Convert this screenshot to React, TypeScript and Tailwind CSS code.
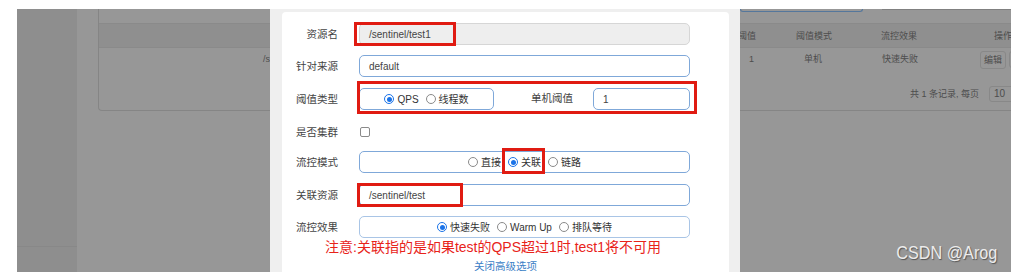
import React from "react";

const Radio = ({ checked, label }: { checked?: boolean; label: string }) => (
  <span className="flex items-center gap-[3px]">
    {checked ? (
      <span className="flex h-[10px] w-[10px] items-center justify-center rounded-full border-[1.5px] border-[#1a73e8] bg-white">
        <span className="h-[5px] w-[5px] rounded-full bg-[#1a73e8]" />
      </span>
    ) : (
      <span className="h-[10px] w-[10px] rounded-full border border-[#8a8a8a] bg-white" />
    )}
    <span>{label}</span>
  </span>
);

const Label = ({ text }: { text: string }) => (
  <div className="w-[56px] shrink-0 text-right text-[10.5px] leading-[14px] text-[#444]">{text}</div>
);

const App: React.FC = () => {
  return (
    <div className="relative h-[272px] w-[1011px] overflow-hidden bg-white font-['Liberation_Sans','Noto_Sans_CJK_SC',sans-serif]">
      <div className="flex h-full flex-col">
        <div className="h-[9px] shrink-0" />
        <div className="flex flex-1">
          <div className="w-[17px] shrink-0" />
          {/* page behind the dialog */}
          <div className="flex flex-1 bg-[#979797]">
            <div className="flex w-[60px] shrink-0 flex-col bg-[#8e8e8e]">
              <div className="h-[238px] border-b border-[#888]" />
            </div>
            <div className="flex-1 overflow-hidden whitespace-nowrap pl-[21px] text-[9px] leading-[12px] text-[#4d4d4d]">
              <div className="h-[102px] rounded-bl-[4px] border-b border-l border-[#858585]">
                <div className="flex h-[14px]">
                  <div className="ml-[641px] h-[3px] w-[123px] shrink-0 rounded-b-[3px] border-x border-b border-[#55779c]" />
                  <div className="ml-[19px] h-px flex-1 bg-[#808080]" />
                </div>
                <div className="flex h-[25px] items-center border-y border-[#8a8a8a] bg-[#8f8f8f]">
                  <span className="ml-[621px] w-[76px] shrink-0">单机阈值</span>
                  <span className="w-[85px] shrink-0">阈值模式</span>
                  <span className="w-[113px] shrink-0">流控效果</span>
                  <span className="shrink-0">操作</span>
                </div>
                <div className="flex h-[30px] items-start pt-[5px]">
                  <span className="ml-[164px] w-[486px] shrink-0">/s</span>
                  <span className="w-[55px] shrink-0">1</span>
                  <span className="w-[78px] shrink-0">单机</span>
                  <span className="w-[98px] shrink-0">快速失败</span>
                  <span className="-mt-[2px] shrink-0 rounded-[3px] border border-[#888] px-[3px] py-[2px]">编辑</span>
                  <span className="-mt-[2px] ml-[3px] h-[17px] w-[10px] shrink-0 rounded-[3px] border border-[#888]" />
                </div>
                <div className="flex items-center pl-[811px] pt-[8px]">
                  <span className="shrink-0">共 1 条记录, 每页</span>
                  <span className="ml-[10px] flex h-[16px] w-[33px] shrink-0 items-center rounded-[3px] border border-[#888] pl-[4px] text-[10px]">
                    10
                  </span>
                </div>
              </div>
            </div>
          </div>
          <div className="w-px shrink-0" />
        </div>
      </div>

      {/* dialog */}
      <div className="absolute left-[270px] top-[9px] h-[263px] w-[470px] bg-[#efefef] pl-[12px] pt-[3px]">
        <div className="h-full w-[447px] rounded-t-[4px] bg-white pt-[11px] text-[#333]">
          <div className="flex h-[22px] items-center">
            <Label text="资源名" />
            <div className="relative ml-[21px]">
              <div className="flex h-[22px] w-[331px] items-center rounded-[5px] border border-[#d6d6d6] bg-[#eeeeee] pl-[9px] text-[10px] text-[#444]">
                /sentinel/test1
              </div>
              <div className="absolute -left-[5px] -top-[1px] h-[24px] w-[102px] border-[3px] border-[#e01b12]" />
            </div>
          </div>

          <div className="mt-[10px] flex h-[22px] items-center">
            <Label text="针对来源" />
            <div className="ml-[21px] flex h-[22px] w-[331px] items-center rounded-[5px] border border-[#7fa8d9] pl-[9px] text-[10px] text-[#444]">
              default
            </div>
          </div>

          <div className="relative mt-[11px] flex h-[22px] items-center">
            <Label text="阈值类型" />
            <div className="ml-[21px] flex h-[22px] w-[135px] items-center justify-center gap-[7px] rounded-[5px] border border-[#7fa8d9] text-[10px]">
              <Radio checked label="QPS" />
              <Radio label="线程数" />
            </div>
            <div className="w-[79px] text-right text-[10.5px] text-[#444]">单机阈值</div>
            <div className="ml-[20px] flex h-[22px] w-[97px] items-center rounded-[5px] border border-[#7fa8d9] pl-[9px] text-[10px] text-[#444]">
              1
            </div>
            <div className="absolute left-[75px] -top-[7px] h-[33px] w-[340px] border-[3px] border-[#e01b12]" />
          </div>

          <div className="mt-[11px] flex h-[22px] items-center">
            <Label text="是否集群" />
            <div className="ml-[22px] h-[10px] w-[10px] rounded-[2px] border border-[#8a8a8a]" />
          </div>

          <div className="mt-[8px] flex h-[22px] items-center">
            <Label text="流控模式" />
            <div className="ml-[21px] flex h-[22px] w-[331px] items-center justify-center gap-[7px] rounded-[5px] border border-[#7fa8d9] text-[10px]">
              <Radio label="直接" />
              <span className="relative">
                <Radio checked label="关联" />
                <span className="absolute -left-[6px] -top-[7px] h-[26px] w-[43px] border-[3px] border-[#e01b12]" />
              </span>
              <Radio label="链路" />
            </div>
          </div>

          <div className="mt-[11px] flex h-[22px] items-center">
            <Label text="关联资源" />
            <div className="relative ml-[21px]">
              <div className="flex h-[22px] w-[331px] items-center rounded-[5px] border border-[#7fa8d9] pl-[9px] text-[10px] text-[#444]">
                /sentinel/test
              </div>
              <div className="absolute -left-[2px] -top-[1px] h-[24px] w-[106px] border-[3px] border-[#e01b12]" />
            </div>
          </div>

          <div className="mt-[10px] flex h-[22px] items-center">
            <Label text="流控效果" />
            <div className="ml-[21px] flex h-[22px] w-[331px] items-center justify-center gap-[7px] rounded-[5px] border border-[#a9c5e6] text-[10px]">
              <Radio checked label="快速失败" />
              <Radio label="Warm Up" />
              <Radio label="排队等待" />
            </div>
          </div>

          <div className="ml-[43px] h-[18px] text-[14px] leading-[18px] text-[#e8231a]">
            注意:关联指的是如果test的QPS超过1时,test1将不可用
          </div>
          <div className="mt-[3px] text-center text-[10.5px] leading-[14px] text-[#3a7ec6]">关闭高级选项</div>
        </div>
      </div>

      <div className="absolute bottom-[10px] right-[14px] origin-right scale-x-[0.9] text-[18px] leading-none text-[#ececec] [text-shadow:1px_1px_1px_#555]">
        CSDN @Arog
      </div>
    </div>
  );
};

export default App;
